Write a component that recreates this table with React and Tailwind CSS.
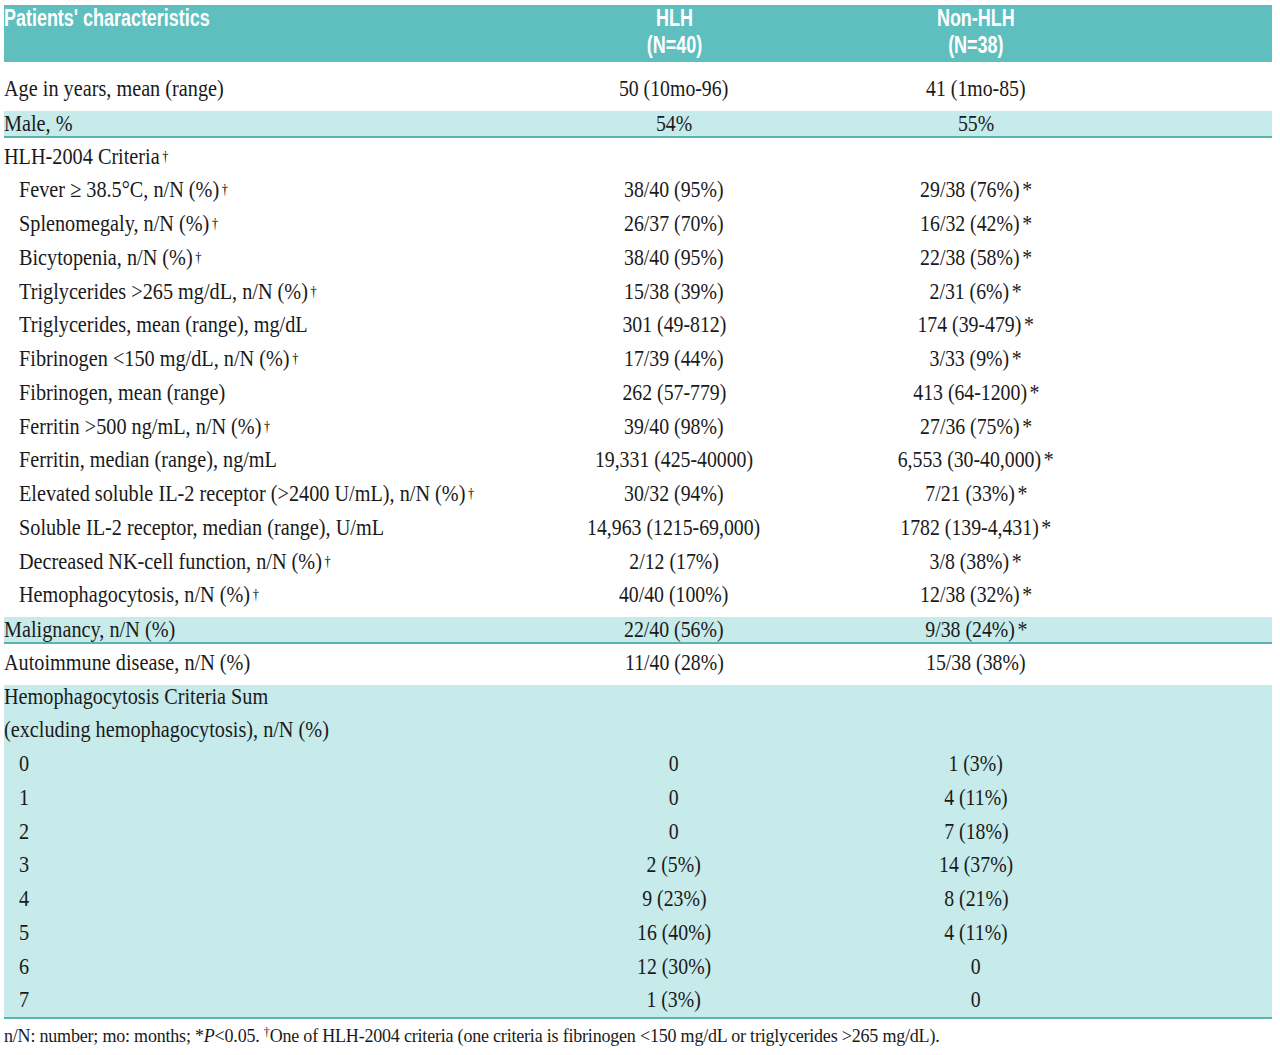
import React from "react";

const rows = [
  { label: "Fever ≥ 38.5°C, n/N (%)", dag: true, a: "38/40 (95%)", b: "29/38 (76%)", star: true },
  { label: "Splenomegaly, n/N (%)", dag: true, a: "26/37 (70%)", b: "16/32 (42%)", star: true },
  { label: "Bicytopenia, n/N (%)", dag: true, a: "38/40 (95%)", b: "22/38 (58%)", star: true },
  { label: "Triglycerides >265 mg/dL, n/N (%)", dag: true, a: "15/38 (39%)", b: "2/31 (6%)", star: true },
  { label: "Triglycerides, mean (range), mg/dL", a: "301 (49-812)", b: "174 (39-479)", star: true },
  { label: "Fibrinogen <150 mg/dL, n/N (%)", dag: true, a: "17/39 (44%)", b: "3/33 (9%)", star: true },
  { label: "Fibrinogen, mean (range)", a: "262 (57-779)", b: "413 (64-1200)", star: true },
  { label: "Ferritin >500 ng/mL, n/N (%)", dag: true, a: "39/40 (98%)", b: "27/36 (75%)", star: true },
  { label: "Ferritin, median (range), ng/mL", a: "19,331 (425-40000)", b: "6,553 (30-40,000)", star: true },
  { label: "Elevated soluble IL-2 receptor (>2400 U/mL), n/N (%)", dag: true, a: "30/32 (94%)", b: "7/21 (33%)", star: true },
  { label: "Soluble IL-2 receptor, median (range), U/mL", a: "14,963 (1215-69,000)", b: "1782 (139-4,431)", star: true },
  { label: "Decreased NK-cell function, n/N (%)", dag: true, a: "2/12 (17%)", b: "3/8 (38%)", star: true },
  { label: "Hemophagocytosis, n/N (%)", dag: true, a: "40/40 (100%)", b: "12/38 (32%)", star: true },
];

const sums = [
  ["0", "0", "1 (3%)"],
  ["1", "0", "4 (11%)"],
  ["2", "0", "7 (18%)"],
  ["3", "2 (5%)", "14 (37%)"],
  ["4", "9 (23%)", "8 (21%)"],
  ["5", "16 (40%)", "4 (11%)"],
  ["6", "12 (30%)", "0"],
  ["7", "1 (3%)", "0"],
];

const Dag = () => <sup className="text-[14px] ml-[3px] relative -top-[3px] text-black">†</sup>;
const Star = () => <span className="ml-[3px]">*</span>;

const Left = ({ children, indent }) => (
  <div className={indent ? "pl-[15px]" : ""}>
    <span className="inline-block origin-left scale-x-[0.88] whitespace-nowrap">{children}</span>
  </div>
);

const Mid = ({ children }) => (
  <div className="text-center">
    <span className="inline-block origin-center scale-x-[0.86] whitespace-nowrap">{children}</span>
  </div>
);

const Row = ({ label, a, b, star, dag, indent }) => (
  <div className="grid grid-cols-[519px_302px_302px_1fr] h-[33.75px] items-center">
    <Left indent={indent}>
      {label}
      {dag && <Dag />}
    </Left>
    <Mid>{a}</Mid>
    <Mid>
      {b}
      {star && <Star />}
    </Mid>
    <div />
  </div>
);

const ShadedRow = (props) => (
  <div className="h-[33.75px] pt-[5px]">
    <div className="h-[27px] bg-[#c7eaea] border-b-2 border-[#5ab4ae] grid grid-cols-[519px_302px_302px_1fr] items-center">
      <div className="relative -top-[4px]">
        <Left>{props.label}</Left>
      </div>
      <div className="relative -top-[4px]">
        <Mid>{props.a}</Mid>
      </div>
      <div className="relative -top-[4px]">
        <Mid>
          {props.b}
          {props.star && <Star />}
        </Mid>
      </div>
      <div />
    </div>
  </div>
);

export default function App() {
  return (
    <div className="w-[1280px] h-[1055px] bg-white overflow-hidden pt-[5px] pl-[4px] text-[#1a1a1a] font-['Liberation_Serif',serif] text-[23px]">
      <div className="w-[1268px]">
        <div className="h-[57px] bg-[#5fbfbf] text-white font-['Liberation_Sans',sans-serif] font-bold text-[23px] leading-[27px] grid grid-cols-[519px_302px_302px_1fr] mb-[10px]">
          <div>
            <span className="inline-block origin-left scale-x-[0.78] whitespace-nowrap">Patients' characteristics</span>
          </div>
          <div className="text-center">
            <span className="inline-block origin-center scale-x-[0.78]">HLH<br />(N=40)</span>
          </div>
          <div className="text-center">
            <span className="inline-block origin-center scale-x-[0.78]">Non-HLH<br />(N=38)</span>
          </div>
          <div />
        </div>

        <Row label="Age in years, mean (range)" a="50 (10mo-96)" b="41 (1mo-85)" />
        <ShadedRow label="Male, %" a="54%" b="55%" />
        <Row label="HLH-2004 Criteria" dag />
        {rows.map((r) => (
          <Row key={r.label} {...r} indent />
        ))}
        <ShadedRow label="Malignancy, n/N (%)" a="22/40 (56%)" b="9/38 (24%)" star />
        <Row label="Autoimmune disease, n/N (%)" a="11/40 (28%)" b="15/38 (38%)" />

        <div className="pt-[5px]">
          <div className="flow-root bg-[#c7eaea] border-b-2 border-[#5ab4ae]">
            <div className="-mt-[5px]">
              <Row label="Hemophagocytosis Criteria Sum" />
              <Row label="(excluding hemophagocytosis), n/N (%)" />
              {sums.map(([k, a, b]) => (
                <Row key={k} label={k} a={a} b={b} indent />
              ))}
            </div>
          </div>
        </div>

        <div className="pt-[7px] leading-[20px] text-[18px] whitespace-nowrap tracking-[-0.2px]">
          n/N: number; mo: months; *<i>P</i>&lt;0.05. <sup className="text-[12px]">†</sup>One of HLH-2004 criteria (one criteria is fibrinogen &lt;150 mg/dL or triglycerides &gt;265 mg/dL).
        </div>
      </div>
    </div>
  );
}
